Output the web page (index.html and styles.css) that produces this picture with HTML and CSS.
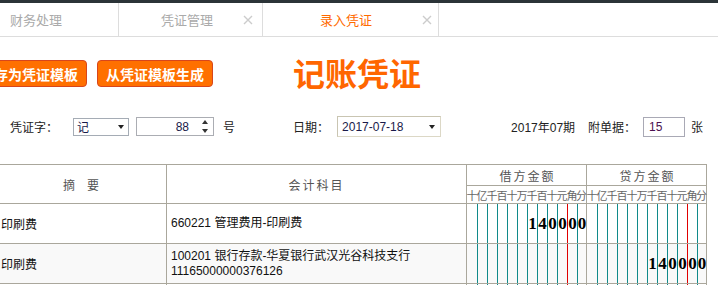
FILE: index.html
```html
<!DOCTYPE html>
<html lang="zh-CN">
<head>
<meta charset="utf-8">
<title>录入凭证</title>
<link rel="stylesheet" href="styles.css">
</head>
<body>
<div class="topbar"></div>
<div class="tabs">
  <div class="tab tab-home"><span>财务处理</span></div>
  <div class="tab tab-mid"><span>凭证管理</span><svg class="close" width="10" height="10" viewBox="0 0 10 10"><path d="M1 1L9 9M9 1L1 9"/></svg></div>
  <div class="tab tab-active"><span>录入凭证</span><svg class="close" width="10" height="10" viewBox="0 0 10 10"><path d="M1 1L9 9M9 1L1 9"/></svg></div>
</div>

<div class="toolbar">
  <button class="btn">存为凭证模板</button>
  <button class="btn">从凭证模板生成</button>
  <h1 class="title">记账凭证</h1>
</div>

<div class="form-row">
  <span class="lbl">凭证字：</span>
  <div class="select sel-word"><span>记</span><i class="caret"></i></div>
  <div class="num-input"><span>88</span><span class="spin"><i class="up"></i><i class="down"></i></span></div>
  <span class="lbl lbl-hao">号</span>
  <span class="lbl lbl-date">日期：</span>
  <div class="select sel-date"><span>2017-07-18</span><i class="caret"></i></div>
  <span class="lbl lbl-period">2017年07期</span>
  <span class="lbl lbl-attach">附单据：</span>
  <div class="text-input"><span>15</span></div>
  <span class="lbl lbl-zhang">张</span>
</div>

<div class="voucher">
  <div class="cell h-summary">摘　要</div>
  <div class="cell h-subject">会计科目</div>
  <div class="cell h-money">借方金额</div>
  <div class="cell h-money">贷方金额</div>
  <div class="cell units"><span>十</span><span>亿</span><span>千</span><span>百</span><span>十</span><span>万</span><span>千</span><span>百</span><span>十</span><span>元</span><span>角</span><span>分</span></div>
  <div class="cell units"><span>十</span><span>亿</span><span>千</span><span>百</span><span>十</span><span>万</span><span>千</span><span>百</span><span>十</span><span>元</span><span>角</span><span>分</span></div>

  <div class="cell summary">印刷费</div>
  <div class="cell subject">660221 管理费用-印刷费</div>
  <div class="cell amount"><span></span><span></span><span></span><span></span><span></span><span></span><span>1</span><span>4</span><span>0</span><span>0</span><span>0</span><span>0</span></div>
  <div class="cell amount"><span></span><span></span><span></span><span></span><span></span><span></span><span></span><span></span><span></span><span></span><span></span><span></span></div>

  <div class="cell summary alt">印刷费</div>
  <div class="cell subject alt">100201 银行存款-华夏银行武汉光谷科技支行<br>11165000000376126</div>
  <div class="cell amount alt"><span></span><span></span><span></span><span></span><span></span><span></span><span></span><span></span><span></span><span></span><span></span><span></span></div>
  <div class="cell amount alt"><span></span><span></span><span></span><span></span><span></span><span></span><span>1</span><span>4</span><span>0</span><span>0</span><span>0</span><span>0</span></div>

  <div class="cell summary"></div>
  <div class="cell subject"></div>
  <div class="cell amount"><span></span><span></span><span></span><span></span><span></span><span></span><span></span><span></span><span></span><span></span><span></span><span></span></div>
  <div class="cell amount"><span></span><span></span><span></span><span></span><span></span><span></span><span></span><span></span><span></span><span></span><span></span><span></span></div>
</div>
</body>
</html>
```

FILE: styles.css
```css
* { box-sizing: border-box; }
html, body { margin: 0; padding: 0; }
body {
  width: 718px;
  height: 285px;
  overflow: hidden;
  background: #fff;
  font-family: "Liberation Sans", "Noto Sans CJK SC", sans-serif;
  font-size: 12px;
  color: #222;
}

.topbar { height: 3px; background: #2b3438; }

.tabs {
  display: flex;
  height: 34px;
  border-bottom: 1px solid #dddddd;
}
.tab {
  display: flex;
  align-items: center;
  height: 33px;
  border-right: 1px solid #dddddd;
  font-size: 13px;
  color: #aaaaaa;
}
.tab-home { width: 119px; padding-left: 10px; }
.tab-mid { width: 144px; padding-left: 42px; }
.tab-active { width: 176px; padding-left: 57px; color: #ff6a00; }
.close { margin-left: auto; stroke: #cccccc; stroke-width: 1.4; fill: none; }
.tab-mid .close { margin-right: 9px; }
.tab-active .close { margin-right: 6px; }

.toolbar {
  display: flex;
  align-items: flex-start;
  gap: 10px;
  height: 32px;
  margin-top: 22px;
  margin-left: -15px;
}
.btn {
  margin-top: 1px;
  height: 27px;
  padding: 0 8px;
  border: 1px solid #d8461c;
  border-radius: 4px;
  background: #ff7000;
  color: #fff;
  font-family: "Liberation Sans", "Noto Sans CJK SC", sans-serif;
  font-size: 14px;
  font-weight: bold;
  white-space: nowrap;
}
.title {
  margin: 0 0 0 70px;
  font-size: 32px;
  line-height: 32px;
  font-weight: bold;
  color: #ff6600;
  white-space: nowrap;
}

.form-row {
  display: flex;
  align-items: center;
  height: 21px;
  margin-top: 25px;
  padding-left: 10px;
  color: #222;
}
.lbl { white-space: nowrap; }
.select, .num-input, .text-input {
  display: flex;
  align-items: center;
  background: #fff;
  color: #1a1a4a;
}
.sel-word {
  width: 56px; height: 18px;
  margin-left: 15px;
  border: 1px solid #a5acb5;
  padding: 0 4px 0 3px;
}
.caret {
  margin-left: auto;
  width: 0; height: 0;
  border-left: 3px solid transparent;
  border-right: 3px solid transparent;
  border-top: 4px solid #222;
}
.num-input {
  width: 78px; height: 19px;
  margin-left: 7px;
  border: 1px solid #abadb3;
  justify-content: flex-end;
  padding-right: 5px;
}
.spin {
  display: flex;
  flex-direction: column;
  justify-content: space-between;
  height: 13px;
  margin-left: 13px;
}
.spin i {
  width: 0; height: 0;
  border-left: 3px solid transparent;
  border-right: 3px solid transparent;
}
.spin .up { border-bottom: 4px solid #333; }
.spin .down { border-top: 4px solid #333; }
.lbl-hao { margin-left: 9px; }
.lbl-date { margin-left: 58px; }
.sel-date {
  width: 104px; height: 21px;
  margin-left: 8px;
  border: 1px solid #dcd8c6;
  border-left-color: #c9c5b2;
  border-top-color: #c9c5b2;
  padding: 0 5px 0 4px;
}
.lbl-period { margin-left: 70px; }
.lbl-attach { margin-left: 13px; }
.text-input {
  width: 42px; height: 20px;
  margin-left: 7px;
  border: 1px solid #a9a9b5;
  padding-left: 5px;
  color: #4a1050;
}
.lbl-zhang { margin-left: 6px; }

.voucher {
  display: grid;
  grid-template-columns: 171px 300px 120px 120px;
  grid-template-rows: 21px 18px 40px 40px 40px;
  width: 712px;
  margin-top: 27px;
  margin-left: -5px;
  border-top: 1px solid #aaa79c;
  border-left: 1px solid #aaa79c;
}
.cell {
  border-right: 1px solid #aaa79c;
  border-bottom: 1px solid #aaa79c;
  display: flex;
  align-items: center;
}
.h-summary, .h-subject {
  grid-row: span 2;
  justify-content: center;
  color: #555;
  letter-spacing: 2px;
}
.h-summary { letter-spacing: 0; }
.h-money {
  justify-content: center;
  color: #555;
  letter-spacing: 2px;
  padding-left: 2px;
}
.units, .amount {
  display: grid;
  grid-template-columns: repeat(11, 10px) 9px;
  align-items: stretch;
}
.units span {
  display: flex;
  justify-content: center;
  align-items: center;
  font-size: 11px;
  color: #666;
  white-space: nowrap;
}
.amount span {
  display: flex;
  justify-content: center;
  align-items: center;
  font-family: "Liberation Serif", serif;
  font-weight: bold;
  font-size: 17px;
  color: #000;
}
.amount span + span { border-left: 1px solid #108a8a; }
.amount span:nth-child(11) { border-left-color: #e00000; }
.summary { padding-left: 5px; color: #111; }
.subject { padding-left: 4px; line-height: 15px; color: #111; }
.alt { background: #f9f9f9; }
```
